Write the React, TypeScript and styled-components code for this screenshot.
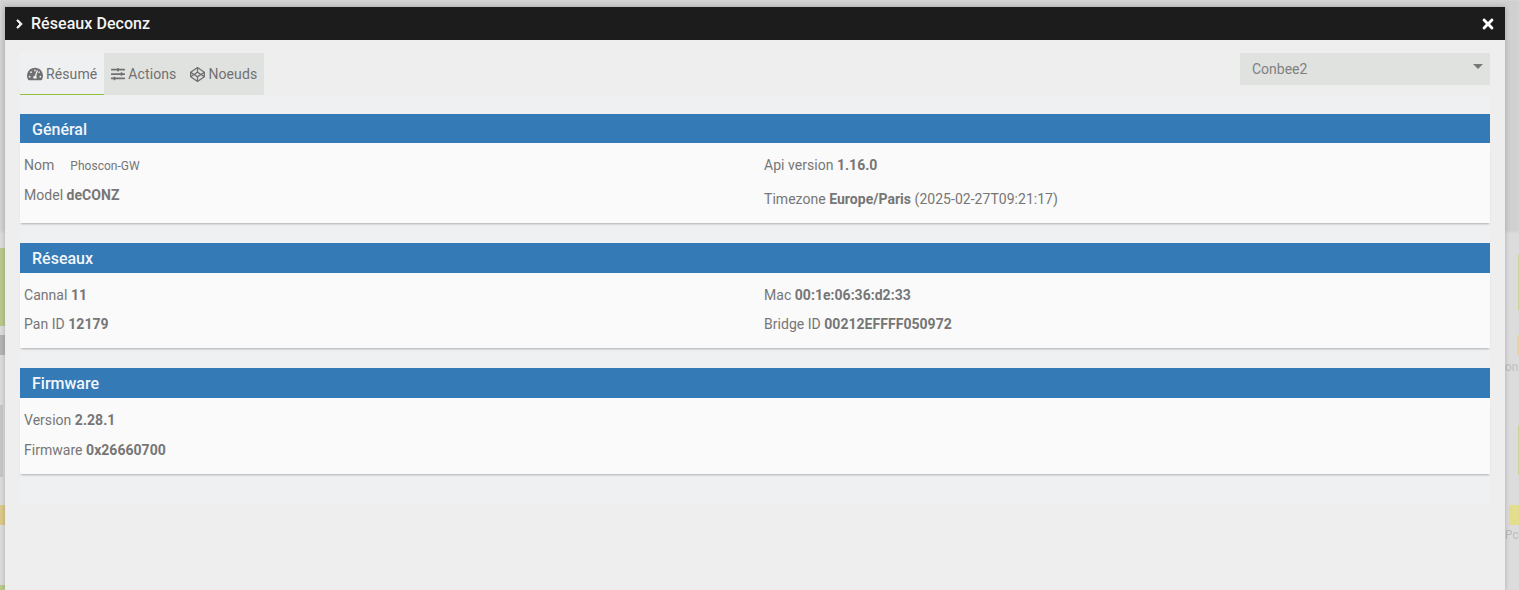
import React from 'react';
import styled, { createGlobalStyle } from 'styled-components';
import { FaChevronRight, FaCodepen, FaSlidersH, FaTachometerAlt, FaTimes } from 'react-icons/fa';

const GlobalStyle = createGlobalStyle`
  html, body {
    margin: 0;
    height: 590px;
    overflow: hidden;
    background: #dcdcdc;
    font-family: Roboto, "Liberation Sans", sans-serif;
  }
`;

// blurred tiles of the page behind the modal, only their edges show
const tiles = [
  { left: 0, top: 248, width: 5, height: 78, color: '#b9c98c' },
  { left: 0, top: 335, width: 5, height: 20, color: '#b4b4b4' },
  { left: 0, top: 405, width: 3, height: 72, color: '#c6c6c6' },
  { left: 0, top: 505, width: 5, height: 20, color: '#dcc98c' },
  { left: 0, top: 585, width: 5, height: 10, color: '#b9c98c' },
  { left: 1518, top: 255, width: 2, height: 55, color: '#c8d49a' },
  { left: 1517, top: 335, width: 3, height: 20, color: '#e8d3a4' },
  { left: 1518, top: 425, width: 2, height: 50, color: '#c8d49a' },
  { left: 1509, top: 505, width: 10, height: 20, color: '#e3de8e' },
];

const sections = [
  {
    title: 'Général',
    headerHeight: 29,
    height: 80,
    left: [
      { label: 'Nom', small: 'Phoscon-GW', top: 7 },
      { label: 'Model', value: 'deCONZ', top: 0 },
    ],
    right: [
      { label: 'Api version', value: '1.16.0', top: 7 },
      { label: 'Timezone', value: 'Europe/Paris', extra: '(2025-02-27T09:21:17)', top: 4 },
    ],
  },
  {
    title: 'Réseaux',
    headerHeight: 30,
    height: 75,
    left: [
      { label: 'Cannal', value: '11', top: 7 },
      { label: 'Pan ID', value: '12179', top: -1 },
    ],
    right: [
      { label: 'Mac', value: '00:1e:06:36:d2:33', top: 7 },
      { label: 'Bridge ID', value: '00212EFFFF050972', top: -1 },
    ],
  },
  {
    title: 'Firmware',
    headerHeight: 30,
    height: 76,
    left: [
      { label: 'Version', value: '2.28.1', top: 7 },
      { label: 'Firmware', value: '0x26660700', top: 0 },
    ],
    right: [],
  },
];

export default function App() {
  return (
    <>
      <GlobalStyle />
      <Backdrop>
        <BackdropTop />
        {tiles.map((tile) => (
          <Tile
            key={`${tile.left}-${tile.top}`}
            $left={tile.left}
            $top={tile.top}
            $width={tile.width}
            $height={tile.height}
            $color={tile.color}
          />
        ))}
        <GhostText $top={360}>on</GhostText>
        <GhostText $top={528}>Pc</GhostText>
        <Modal>
          <TitleBar>
            <TitleLeft>
              <ChevronIcon />
              <Title>Réseaux Deconz</Title>
            </TitleLeft>
            <CloseButton>
              <FaTimes size={16} />
            </CloseButton>
          </TitleBar>
          <Content>
            <TopRow>
              <Tabs>
                <Tab $active>
                  <FaTachometerAlt size={16} />
                  Résumé
                </Tab>
                <Tab>
                  <FaSlidersH size={14} />
                  Actions
                </Tab>
                <Tab>
                  <FaCodepen size={15} />
                  Noeuds
                </Tab>
              </Tabs>
              <Select>
                Conbee2
                <Caret />
              </Select>
            </TopRow>
            <TabPanel>
              {sections.map((section) => (
                <Section key={section.title}>
                  <SectionHeader $height={section.headerHeight}>{section.title}</SectionHeader>
                  <SectionBody $height={section.height}>
                    {[section.left, section.right].map((column, index) => (
                      <Column key={index}>
                        {column.map((row: any) => (
                          <Row key={row.label} $top={row.top}>
                            {row.label}
                            {row.small && <Small>{row.small}</Small>}
                            {row.value && <b> {row.value}</b>}
                            {row.extra && ` ${row.extra}`}
                          </Row>
                        ))}
                      </Column>
                    ))}
                  </SectionBody>
                </Section>
              ))}
            </TabPanel>
          </Content>
        </Modal>
      </Backdrop>
    </>
  );
}

const Backdrop = styled.div`
  position: relative;
  width: 1519px;
  height: 590px;
  padding-top: 7px;
  box-sizing: border-box;
  overflow: hidden;
  background: #dcdcdc;
`;

const BackdropTop = styled.div`
  position: absolute;
  left: 0;
  top: 0;
  width: 100%;
  height: 232px;
  background: #d0d0d0;
  filter: blur(1px);
`;

const Tile = styled.div<{ $left: number; $top: number; $width: number; $height: number; $color: string }>`
  position: absolute;
  left: ${(p) => p.$left}px;
  top: ${(p) => p.$top}px;
  width: ${(p) => p.$width}px;
  height: ${(p) => p.$height}px;
  background: ${(p) => p.$color};
  filter: blur(0.6px);
`;

const GhostText = styled.span<{ $top: number }>`
  position: absolute;
  left: 1505px;
  top: ${(p) => p.$top}px;
  font-size: 12px;
  color: #bdbdbd;
  filter: blur(0.5px);
`;

const Modal = styled.div`
  position: relative;
  margin-left: 5px;
  width: 1500px;
  height: 583px;
  background: #eeeeee;
  box-shadow: 0 0 5px rgba(0, 0, 0, 0.22);
`;

const TitleBar = styled.div`
  display: flex;
  align-items: center;
  justify-content: space-between;
  height: 33px;
  padding: 0 10px;
  background: #1c1c1c;
  color: #f4f4f4;
`;

const TitleLeft = styled.div`
  display: flex;
  align-items: center;
  gap: 7px;
`;

const ChevronIcon = styled(FaChevronRight)`
  width: 9px;
  height: 10px;
  stroke: currentColor;
  stroke-width: 50px;
`;

const Title = styled.span`
  font-size: 16px;
  font-weight: 500;
  letter-spacing: 0.05px;
`;

const CloseButton = styled.div`
  display: flex;
  margin-right: -1px;
  color: #ffffff;
`;

const Content = styled.div`
  padding: 13px 15px 0;
`;

const TopRow = styled.div`
  display: flex;
  justify-content: space-between;
  align-items: flex-start;
`;

const Tabs = styled.div`
  display: flex;
  height: 42px;
  background: #e0e2e0;
`;

const Tab = styled.div<{ $active?: boolean }>`
  display: flex;
  align-items: center;
  gap: 3px;
  padding: 0 7px;
  font-size: 14px;
  letter-spacing: 0.1px;
  color: #707070;
  background: ${(p) => (p.$active ? '#eff0f2' : 'transparent')};
  border-bottom: ${(p) => (p.$active ? '1px solid #93c03f' : 'none')};
  box-sizing: border-box;
`;

const Select = styled.div`
  position: relative;
  box-sizing: border-box;
  width: 250px;
  height: 32px;
  padding-left: 12px;
  line-height: 32px;
  font-size: 14px;
  color: #808080;
  background: #e0e2e0;
`;

const Caret = styled.span`
  position: absolute;
  right: 7px;
  top: 11px;
  border-left: 5px solid transparent;
  border-right: 5px solid transparent;
  border-top: 5px solid #777777;
`;

const TabPanel = styled.div`
  display: flex;
  flex-direction: column;
  gap: 20px;
  height: 410px;
  padding-top: 19px;
  box-sizing: border-box;
  background: #eff0f2;
`;

const Section = styled.section`
  display: flex;
  flex-direction: column;
`;

const SectionHeader = styled.div<{ $height: number }>`
  height: ${(p) => p.$height}px;
  line-height: ${(p) => p.$height + 2}px;
  padding-left: 12px;
  font-size: 16px;
  font-weight: 500;
  color: #f2f6fa;
  background: #337ab7;
`;

const SectionBody = styled.div<{ $height: number }>`
  display: grid;
  grid-template-columns: 740px 1fr;
  height: ${(p) => p.$height}px;
  background: #fafafa;
  box-shadow: 0 2px 2px -1px rgba(0, 0, 0, 0.28);
`;

const Column = styled.div`
  display: flex;
  flex-direction: column;
  padding-left: 4px;
`;

const Row = styled.div<{ $top: number }>`
  margin-top: ${(p) => p.$top}px;
  height: 30px;
  line-height: 30px;
  font-size: 14px;
  letter-spacing: 0.03px;
  color: #767676;
  b {
    font-weight: 700;
  }
`;

const Small = styled.span`
  margin-left: 16px;
  font-size: 12px;
`;
